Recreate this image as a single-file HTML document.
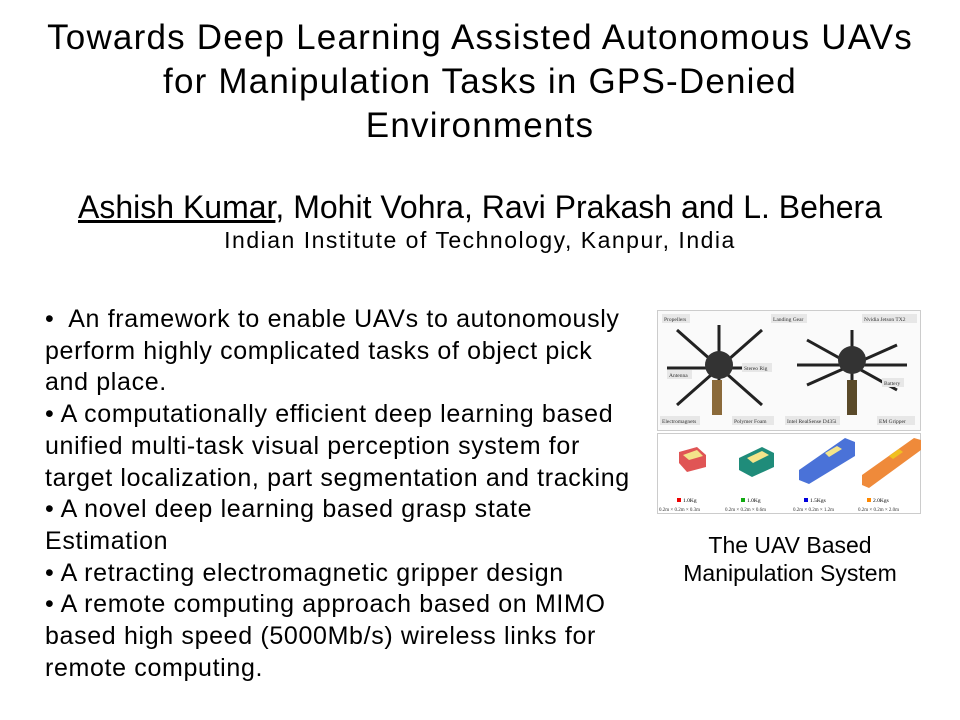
<!DOCTYPE html>
<html><head><meta charset="utf-8"><style>
body{margin:0;width:960px;height:720px;background:#fff;font-family:"Liberation Sans",Arial,sans-serif;color:#000;position:relative;overflow:hidden}
.t{position:absolute;left:0;width:960px;text-align:center;font-size:35px;letter-spacing:1.2px;line-height:44px;top:16px;white-space:nowrap}
.au{position:absolute;left:0;width:960px;text-align:center;font-size:32px;top:189px;white-space:nowrap}
.af{position:absolute;left:0;width:960px;text-align:center;font-size:23px;letter-spacing:1.5px;top:227px;white-space:nowrap}
.b{position:absolute;left:45px;top:304px;font-size:25px;letter-spacing:0.65px;line-height:31.7px;width:620px;white-space:nowrap}
.cap{position:absolute;left:660px;width:260px;text-align:center;top:531px;font-size:23px;line-height:28px;white-space:nowrap}
</style></head><body>
<div class="t">Towards Deep Learning Assisted Autonomous UAVs<br>for Manipulation Tasks in GPS-Denied<br>Environments</div>
<div class="au"><u>Ashish Kumar</u>, Mohit Vohra, Ravi Prakash and L. Behera</div>
<div class="af">Indian Institute of Technology, Kanpur, India</div>
<div class="b">•&nbsp; An framework to enable UAVs to autonomously<br>perform highly complicated tasks of object pick<br>and place.<br>• A computationally efficient deep learning based<br>unified multi-task visual perception system for<br>target localization, part segmentation and tracking<br>• A novel deep learning based grasp state<br>Estimation<br>• A retracting electromagnetic gripper design<br>• A remote computing approach based on MIMO<br>based high speed (5000Mb/s) wireless links for<br>remote computing.</div>
<svg style="position:absolute;left:657px;top:310px" width="264" height="204" viewBox="0 0 264 204" font-family="Liberation Serif,serif" font-size="5.5">
<rect x="0.5" y="0.5" width="263" height="120" fill="#fafafa" stroke="#ccc"/>
<rect x="0.5" y="123.5" width="263" height="80" fill="#fff" stroke="#ccc"/>
<g stroke="#222" stroke-width="3" fill="none">
<path d="M20 20 L105 95 M105 20 L20 95 M62 15 L62 100 M10 58 L115 58"/>
<path d="M150 30 L240 80 M240 35 L150 75 M195 20 L195 95 M140 55 L250 55"/>
</g>
<circle cx="62" cy="55" r="14" fill="#333"/><circle cx="195" cy="50" r="14" fill="#333"/>
<rect x="55" y="70" width="10" height="35" fill="#8b6a3a"/><rect x="190" y="70" width="10" height="35" fill="#5a4a2a"/>
<g fill="#e7e7e7"><rect x="5" y="4" width="28" height="9"/><rect x="114" y="4" width="36" height="9"/><rect x="205" y="4" width="55" height="9"/><rect x="10" y="60" width="25" height="9"/><rect x="85" y="53" width="30" height="9"/><rect x="225" y="68" width="22" height="9"/><rect x="3" y="106" width="40" height="9"/><rect x="75" y="106" width="42" height="9"/><rect x="128" y="106" width="55" height="9"/><rect x="220" y="106" width="38" height="9"/></g>
<g fill="#333"><text x="7" y="11">Propellers</text><text x="116" y="11">Landing Gear</text><text x="207" y="11">Nvidia Jetson TX2</text><text x="12" y="67">Antenna</text><text x="87" y="60">Stereo Rig</text><text x="227" y="75">Battery</text><text x="5" y="113">Electromagnets</text><text x="77" y="113">Polymer Foam</text><text x="130" y="113">Intel RealSense D435i</text><text x="222" y="113">EM Gripper</text></g>
<path d="M22 142 L40 137 L49 145 L49 157 L30 162 L22 153Z" fill="#e05555"/><path d="M26 145 L40 140 L46 146 L32 150Z" fill="#f3e48a"/>
<path d="M82 148 L105 137 L117 143 L117 157 L95 167 L82 160Z" fill="#1f8c7a"/><path d="M90 148 L105 141 L112 145 L96 153Z" fill="#f3e48a"/>
<path d="M142 160 L188 128 L198 132 L198 146 L152 174 L142 170Z" fill="#4a72d8"/><path d="M168 143 L180 136 L185 139 L172 147Z" fill="#f3e48a"/>
<path d="M205 165 L257 128 L264 130 L264 140 L212 178 L205 175Z" fill="#ef8a3a"/><path d="M232 146 L242 139 L246 142 L236 149Z" fill="#f0c020"/>
<rect x="20" y="188" width="4" height="4" fill="#e00"/><text x="26" y="192">1.0Kg</text>
<rect x="84" y="188" width="4" height="4" fill="#1a1"/><text x="90" y="192">1.0Kg</text>
<rect x="147" y="188" width="4" height="4" fill="#00d"/><text x="153" y="192">1.5Kgs</text>
<rect x="210" y="188" width="4" height="4" fill="#f80"/><text x="216" y="192">2.0Kgs</text>
<g fill="#333" font-size="5"><text x="2" y="201">0.2m × 0.2m × 0.3m</text><text x="68" y="201">0.2m × 0.2m × 0.6m</text><text x="136" y="201">0.2m × 0.2m × 1.2m</text><text x="201" y="201">0.2m × 0.2m × 2.0m</text></g>
</svg>
<div class="cap">The UAV Based<br>Manipulation System</div>
</body></html>
